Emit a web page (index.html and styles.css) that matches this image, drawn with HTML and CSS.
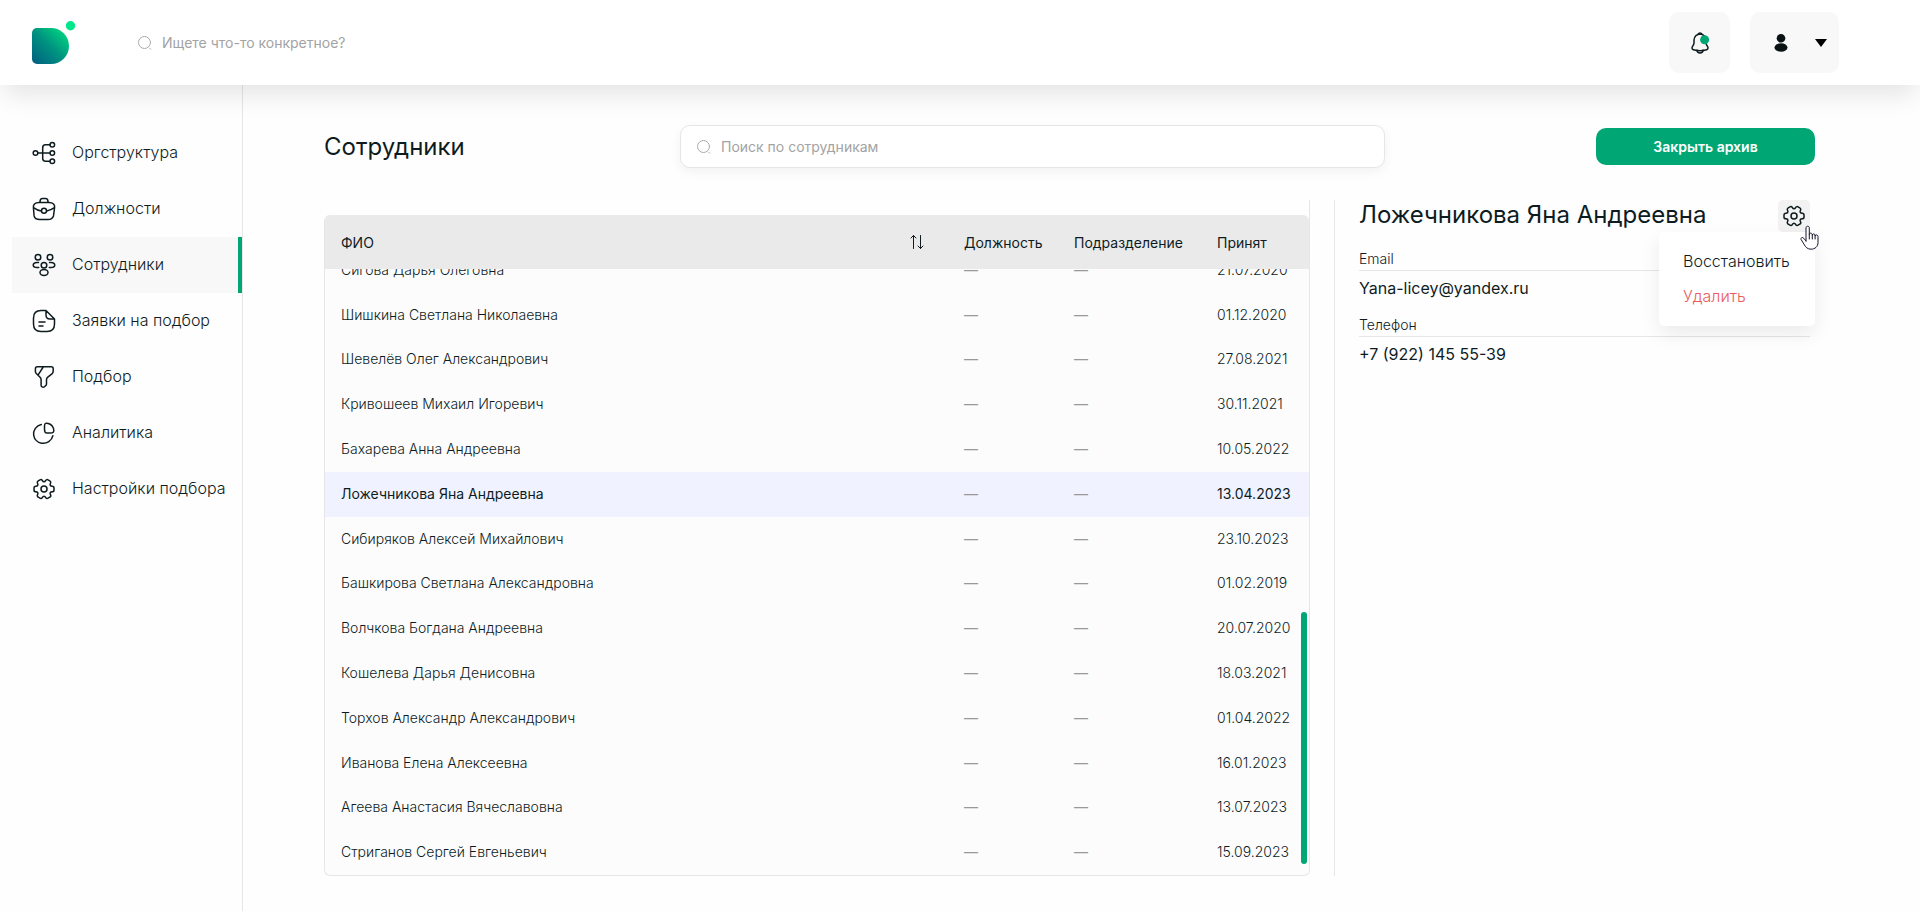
FILE: index.html
```html
<!DOCTYPE html>
<html lang="ru">
<head>
<meta charset="utf-8">
<title>Сотрудники</title>
<link rel="stylesheet" href="styles.css">
</head>
<body>
<svg class="sprite" aria-hidden="true">
  <symbol id="search" viewBox="0 0 14 14"><circle cx="6.5" cy="6.5" r="6"/><path d="M11.7 12.2l1 1"/></symbol>
  <symbol id="gear" viewBox="0 0 24 24"><circle cx="12" cy="12" r="3"/><path d="M2 12.88v-1.76c0-1.04.85-1.9 1.9-1.9 1.81 0 2.55-1.28 1.64-2.85-.52-.9-.21-2.07.7-2.59l1.73-.99c.79-.47 1.81-.19 2.28.6l.11.19c.9 1.57 2.38 1.57 3.29 0l.11-.19c.47-.79 1.49-1.07 2.28-.6l1.73.99c.91.52 1.22 1.69.7 2.59-.91 1.57-.17 2.85 1.64 2.85 1.04 0 1.9.85 1.9 1.9v1.76c0 1.04-.85 1.9-1.9 1.9-1.81 0-2.55 1.28-1.64 2.85.52.91.21 2.07-.7 2.59l-1.73.99c-.79.47-1.81.19-2.28-.6l-.11-.19c-.9-1.57-2.38-1.57-3.29 0l-.11.19c-.47.79-1.49 1.07-2.28.6l-1.73-.99c-.91-.52-1.22-1.69-.7-2.59.91-1.57.17-2.85-1.64-2.85-1.05 0-1.9-.86-1.9-1.9z"/></symbol>
</svg>

<header class="topbar">
  <a class="logo" href="#" aria-label="Главная">
    <svg width="44" height="44" viewBox="0 0 44 44" aria-hidden="true">
      <defs><linearGradient id="brand" x1="0" y1="1" x2="1" y2="0"><stop offset="0" stop-color="#005d80"/><stop offset=".5" stop-color="#009480"/><stop offset="1" stop-color="#00e67f"/></linearGradient></defs>
      <path d="M5 7h14a18 18 0 0 1 0 36H5a5 5 0 0 1-5-5V12a5 5 0 0 1 5-5z" fill="url(#brand)"/>
      <circle cx="38.500" cy="4.700" r="4.700" fill="#00e68a"/>
    </svg>
  </a>
  <label class="search search-global">
    <svg class="search-icon" aria-hidden="true"><use href="#search"/></svg>
    <input type="search" placeholder="Ищете что-то конкретное?" aria-label="Общий поиск">
  </label>
  <button class="tile tile-bell" type="button" aria-label="Уведомления">
    <svg width="24" height="24" viewBox="0 0 24 24" fill="none" stroke="#0e1c1f" stroke-width="1.500" stroke-linecap="round" aria-hidden="true">
      <path d="M12.020 2.910c-3.310 0-6 2.690-6 6v2.890c0 .61-.26 1.540-.57 2.060L4.300 15.770c-.71 1.180-.22 2.490 1.080 2.930 4.310 1.440 8.960 1.440 13.270 0 1.210-.4 1.740-1.830 1.080-2.930l-1.150-1.910c-.3-.52-.56-1.450-.56-2.060V8.910c0-3.300-2.700-6-6-6z"/>
      <path d="M13.870 3.200a6.800 6.800 0 0 0-3.700 0c.29-.74 1.010-1.260 1.850-1.260s1.560.52 1.850 1.260zM15.020 19.060c0 1.650-1.350 3-3 3s-3-1.350-3-3"/>
      <circle cx="16.600" cy="8.700" r="4.500" fill="#00a775" stroke="none"/>
    </svg>
  </button>
  <button class="tile tile-user" type="button" aria-label="Профиль">
    <svg width="14" height="18" viewBox="0 0 14 18" fill="#0a1214" aria-hidden="true"><circle cx="7" cy="4.300" r="4.300"/><ellipse cx="7" cy="13.500" rx="6.500" ry="4.300"/></svg>
    <svg width="12" height="8" viewBox="0 0 12 8" aria-hidden="true"><path d="M0 0h12L6 8z"/></svg>
  </button>
</header>

<div class="shell">
  <nav class="sidebar" aria-label="Разделы">
    <a class="nav-item" href="#"><svg class="icon" viewBox="0 0 24 24" aria-hidden="true"><circle cx="3.500" cy="12" r="2.300"/><circle cx="20.300" cy="3.700" r="2.300"/><circle cx="20.300" cy="12" r="2.300"/><circle cx="20.300" cy="20.300" r="2.300"/><path d="M6 12h12M18 3.700h-4.500c-2 0-2.800 1-2.800 3v10.600c0 2 .8 3 2.800 3H18"/></svg><span>Оргструктура</span></a>
    <a class="nav-item" href="#"><svg class="icon" viewBox="0 0 24 24" aria-hidden="true"><path d="M8 22.500h8c4 0 4.800-1.600 5.500-3.600l1.100-8.400C22.900 7.800 21.300 5.500 17 5.500H7c-4.300 0-5.900 2.300-5.600 5l.7 8.400c.3 2 1.900 3.600 5.900 3.600zM8 5.500v-.8C8 3 8.300 1.500 10.500 1.500h3c2.200 0 2.500 1.500 2.500 3.200v.8M22.400 10.700c-2.400 1.700-5 2.800-7.600 3.200M1.600 10.700c2.400 1.900 5 2.900 7.600 3.200"/><circle cx="12" cy="13.700" r="2.500"/></svg><span>Должности</span></a>
    <a class="nav-item is-active" href="#" aria-current="page"><svg class="icon" viewBox="0 0 24 24" aria-hidden="true"><circle cx="6" cy="4.200" r="2.800"/><circle cx="18" cy="4.200" r="2.800"/><circle cx="12" cy="12.300" r="2.800"/><ellipse cx="12" cy="19.500" rx="4" ry="3"/><path d="M6.500 9.600H4.800c-4.800 0-4.800 5 .2 5h1.700M17.500 9.600h1.700c4.800 0 4.800 5-.2 5h-1.700"/></svg><span>Сотрудники</span></a>
    <a class="nav-item" href="#"><svg class="icon" viewBox="0 0 24 24" aria-hidden="true"><path d="M22.500 10v5c0 5-2.300 7.500-7.500 7.500H9c-5 0-7.500-2.500-7.500-7.500V9C1.500 4 4 1.500 9 1.500h5M22.500 10H18c-3 0-4-1-4-4V1.500L22.500 10zM7 13h6M7 17h4"/></svg><span>Заявки на подбор</span></a>
    <a class="nav-item" href="#"><svg class="icon" viewBox="0 0 24 24" aria-hidden="true"><path d="M5.400 1.800h13.800a2 2 0 0 1 2 2v2.500c0 .8-.5 1.800-1 2.300l-4.700 3.800c-.6.500-1 1.500-1 2.300V19c0 .6-.4 1.400-.9 1.700l-1.400 1.200c-1.300.8-3.100-.1-3.100-1.700v-5.600c0-.7-.4-1.600-.8-2.100L4.300 8.500C3.800 8 3.400 7.100 3.400 6.500V3.800c0-1.200.9-2 2-2zM11.200 2L6 10.200"/></svg><span>Подбор</span></a>
    <a class="nav-item" href="#"><svg class="icon" viewBox="0 0 24 24" aria-hidden="true"><path d="M18.320 12c2.600 0 4.200-.8 3.240-4.280-.65-2.210-3.070-4.630-5.280-5.280C13.500 1.600 12.500 2.500 12.500 5.180v3.380c0 2.440.5 3.440 2.500 3.440h3.320zM20.900 14.700c-1.100 5-6.050 8.400-11.300 7.500-4-.6-7.200-3.900-7.900-7.900C.9 9.300 4.400 4.400 9.300 3.400"/></svg><span>Аналитика</span></a>
    <a class="nav-item" href="#"><svg class="icon" aria-hidden="true"><use href="#gear"/></svg><span>Настройки подбора</span></a>
  </nav>

  <main class="content">
    <div class="toolbar">
      <h1 class="title">Сотрудники</h1>
      <label class="search search-box">
        <svg class="search-icon" aria-hidden="true"><use href="#search"/></svg>
        <input type="search" placeholder="Поиск по сотрудникам" aria-label="Поиск по сотрудникам">
      </label>
      <button class="primary" type="button">Закрыть архив</button>
    </div>

    <div class="panes">
      <section class="list" aria-label="Список сотрудников">
        <div class="card">
          <div class="scroller">
            <table class="people">
              <colgroup><col><col class="col-post"><col class="col-unit"><col class="col-date"></colgroup>
              <thead>
                <tr>
                  <th scope="col"><div class="sortable">ФИО
                    <button class="sort" type="button" aria-label="Сортировать"><svg width="14" height="16" viewBox="0 0 14 16" fill="none" stroke="#0e1c1f" stroke-linecap="round" stroke-linejoin="round" aria-hidden="true"><path d="M3.500 14.500v-13M1 4l2.500-2.500L6 4M10.500 1.500v13M8 12l2.500 2.500L13 12"/></svg></button></div></th>
                  <th scope="col">Должность</th><th scope="col">Подразделение</th><th scope="col">Принят</th>
                </tr>
              </thead>
              <tbody>
                <tr><td>Сигова Дарья Олеговна</td><td class="none">—</td><td class="none">—</td><td>21.07.2020</td></tr>
                <tr><td>Шишкина Светлана Николаевна</td><td class="none">—</td><td class="none">—</td><td>01.12.2020</td></tr>
                <tr><td>Шевелёв Олег Александрович</td><td class="none">—</td><td class="none">—</td><td>27.08.2021</td></tr>
                <tr><td>Кривошеев Михаил Игоревич</td><td class="none">—</td><td class="none">—</td><td>30.11.2021</td></tr>
                <tr><td>Бахарева Анна Андреевна</td><td class="none">—</td><td class="none">—</td><td>10.05.2022</td></tr>
                <tr class="is-selected"><td>Ложечникова Яна Андреевна</td><td class="none">—</td><td class="none">—</td><td>13.04.2023</td></tr>
                <tr><td>Сибиряков Алексей Михайлович</td><td class="none">—</td><td class="none">—</td><td>23.10.2023</td></tr>
                <tr><td>Башкирова Светлана Александровна</td><td class="none">—</td><td class="none">—</td><td>01.02.2019</td></tr>
                <tr><td>Волчкова Богдана Андреевна</td><td class="none">—</td><td class="none">—</td><td>20.07.2020</td></tr>
                <tr><td>Кошелева Дарья Денисовна</td><td class="none">—</td><td class="none">—</td><td>18.03.2021</td></tr>
                <tr><td>Торхов Александр Александрович</td><td class="none">—</td><td class="none">—</td><td>01.04.2022</td></tr>
                <tr><td>Иванова Елена Алексеевна</td><td class="none">—</td><td class="none">—</td><td>16.01.2023</td></tr>
                <tr><td>Агеева Анастасия Вячеславовна</td><td class="none">—</td><td class="none">—</td><td>13.07.2023</td></tr>
                <tr><td>Стриганов Сергей Евгеньевич</td><td class="none">—</td><td class="none">—</td><td>15.09.2023</td></tr>
              </tbody>
            </table>
          </div>
          <div class="thumb"></div>
        </div>
      </section>

      <section class="detail" aria-label="Карточка сотрудника">
        <div class="detail-head">
          <h2 class="title">Ложечникова Яна Андреевна</h2>
          <div class="actions">
            <button class="gear-button" type="button" aria-label="Действия" aria-expanded="true"><svg class="icon" aria-hidden="true"><use href="#gear"/></svg></button>
            <div class="menu">
              <button class="menu-item" type="button">Восстановить</button>
              <button class="menu-item danger" type="button">Удалить</button>
            </div>
            <svg class="pointer" width="20" height="26" viewBox="0 0 20 26" fill="#fff" stroke="#17162b" stroke-linejoin="round" stroke-linecap="round" aria-hidden="true"><path d="M6 16V3c0-2.400 3.300-2.400 3.300 0v6.500c0-1.900 3-1.700 3 .2v.5c0-1.800 2.800-1.600 2.800.2v.6c0-1.600 2.900-1.500 2.900.5v6c0 4-3 6.700-7 6.700-3.500 0-5.500-2-7-5L1.100 14.500c-.7-2 1.400-2.700 2.700-1.200L6 16M9.300 9.500V14M12.300 10V14M15.100 10.500V14"/></svg>
          </div>
        </div>
        <dl class="fields">
          <dt>Email</dt><dd>Yana-licey@yandex.ru</dd>
          <dt>Телефон</dt><dd>+7 (922) 145 55-39</dd>
        </dl>
      </section>
    </div>
  </main>
</div>
</body>
</html>
```
FILE: styles.css
```css
* { box-sizing: border-box; }

:root {
  --ink: #0e1c1f;
  --green: #00a775;
  --line: #e6e6e6;
}

body {
  margin: 0;
  height: 100vh;
  display: flex;
  flex-direction: column;
  overflow: hidden;
  background: #fefefe;
  color: var(--ink);
  font: 300 14px/17px Inter, "Noto Sans", sans-serif;
}

button, input { font: inherit; color: inherit; border: 0; background: none; padding: 0; }
h1, h2, dl, dd { margin: 0; }
.sprite { position: absolute; width: 0; height: 0; }

.icon { width: 24px; height: 24px; flex: none; fill: none; stroke: var(--ink); stroke-width: 1.5; stroke-linecap: round; stroke-linejoin: round; }

/* Top bar */
.topbar {
  position: relative;
  z-index: 1;
  display: flex;
  align-items: center;
  height: 85px;
  flex: none;
  padding: 0 81px 0 32px;
  background: #fff;
  box-shadow: 0 14px 24px -4px rgba(0, 0, 0, .1);
}
.logo { display: flex; width: 106px; }
.search { display: flex; align-items: center; gap: 10px; }
.search-icon { width: 14px; height: 14px; flex: none; fill: none; stroke: #aaa; stroke-linecap: round; }
.search input { flex: 1; min-width: 0; outline: 0; font-weight: 400; }
.search input::placeholder { color: #a3a3a3; opacity: 1; }
.search-global { flex: 1; }
.tile { display: flex; align-items: center; justify-content: center; height: 61px; border-radius: 10px; background: #f8f8f8; }
.tile-bell { width: 61px; margin-right: 20px; }
.tile-user { width: 89px; gap: 27px; padding-left: 11px; }

/* Sidebar */
.shell { display: flex; flex: 1; min-height: 0; }
.sidebar { width: 243px; flex: none; padding: 40px 0 0 12px; border-right: 1px solid var(--line); }
.nav-item {
  display: flex;
  align-items: center;
  gap: 16px;
  height: 56px;
  padding-left: 20px;
  color: var(--ink);
  font-size: 16px;
  line-height: 20px;
  white-space: nowrap;
  text-decoration: none;
}
.nav-item span { padding-bottom: 2px; }
.nav-item.is-active { background: #f8f8f8; border-right: 4px solid var(--green); }

/* Content */
.content { flex: 1; min-width: 0; display: flex; flex-direction: column; padding: 40px 105px 35px 81px; }
.toolbar { display: grid; grid-template-columns: 356fr 705fr 430fr; align-items: center; height: 43px; margin-bottom: 32px; }
.title { font-size: 24px; line-height: 28px; font-weight: 400; white-space: nowrap; }
.search-box { height: 43px; padding: 0 16px; border: 1px solid var(--line); border-radius: 10px; background: #fff; box-shadow: 0 4px 12px rgba(0, 0, 0, .05); }
.primary { justify-self: end; width: 219px; height: 37px; border-radius: 10px; background: var(--green); color: #fff; font-weight: 600; }

.panes { flex: 1; min-height: 0; display: flex; }
.list { flex: 1; min-width: 0; padding-top: 15px; border-right: 1px solid var(--line); border-radius: 0 0 6px 0; }
.card { position: relative; height: 100%; border: 1px solid var(--line); border-right: 0; border-top: 0; border-radius: 6px; background: #fcfcfc; overflow: hidden; }
.scroller { display: flex; flex-direction: column-reverse; height: 100%; overflow-y: auto; scrollbar-width: none; }
.thumb { position: absolute; right: 2px; bottom: 11px; width: 6px; height: 252px; border-radius: 3px; background: var(--green); }

.people { width: 100%; table-layout: fixed; border-collapse: separate; border-spacing: 0; text-align: left; }
.col-post { width: 110px; }
.col-unit { width: 143px; }
.col-date { width: 108px; }
.people th { position: sticky; top: 0; height: 54px; padding: 0 16px; background: #eaeaea; font-weight: 400; white-space: nowrap; }
.people td { padding: 14px 0 14px 16px; line-height: 1.2; white-space: nowrap; }
.people .none { color: #999; font-weight: 500; }
.is-selected { background: #f0f3ff; font-weight: 400; }
.sortable { display: flex; align-items: center; justify-content: space-between; }
.sort { display: flex; padding-right: 8px; }

/* Employee card */
.detail { width: 481px; flex: none; margin-left: 24px; padding: 0 5px 0 24px; border-left: 1px solid var(--line); }
.detail-head { display: flex; align-items: center; justify-content: space-between; height: 32px; }
.detail-head .title { padding-bottom: 2px; }
.actions { position: relative; }
.gear-button { display: flex; align-items: center; justify-content: center; width: 32px; height: 32px; border-radius: 5px; background: #f2f2f2; }
.menu { position: absolute; top: 32px; right: -5px; display: flex; flex-direction: column; gap: 15px; width: 156px; padding: 19px 0 20px 24px; border-radius: 5px; background: #fff; box-shadow: 0 8px 20px rgba(0, 0, 0, .08); }
.menu-item { text-align: left; font-size: 16px; line-height: 20px; }
.danger { color: #ea5c5c; }
.pointer { position: absolute; left: 22px; top: 25px; }
.fields { margin-top: 18px; }
.fields dt { padding-bottom: 3px; border-bottom: 1px solid var(--line); }
.fields dd { padding: 7px 0 18px; font-size: 16px; line-height: 20px; font-weight: 400; }
```
